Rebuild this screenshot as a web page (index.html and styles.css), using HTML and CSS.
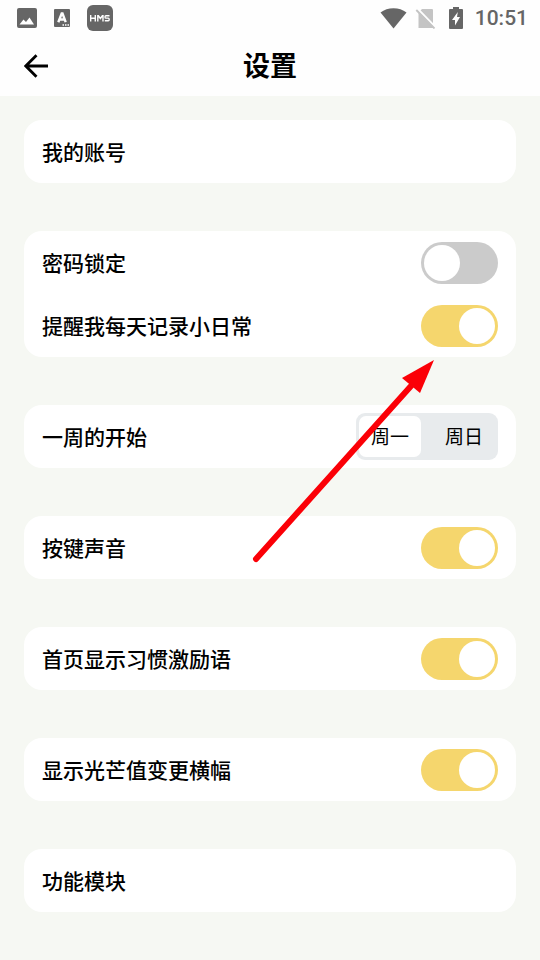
FILE: index.html
```html
<!DOCTYPE html>
<html lang="zh-CN">
<head>
<meta charset="utf-8">
<meta name="viewport" content="width=device-width, initial-scale=1">
<title>设置</title>
<link rel="stylesheet" href="styles.css">
</head>
<body>
<div class="status">
  <div class="status-left">
    <svg width="20" height="20" viewBox="0 0 20 20" aria-hidden="true"><path fill="#666" fill-rule="evenodd" d="M2 0h16q2 0 2 2v16q0 2-2 2H2q-2 0-2-2V2q0-2 2-2zM2.500 16.500h14.500L12.500 9.500 9 14 6.500 11.500z"/></svg>
    <svg width="16" height="18" viewBox="0 0 16 18" aria-hidden="true"><rect width="16" height="18" rx="1" fill="#666"/><path fill="none" stroke="#fff" stroke-width="2.400" d="M4.300 13.200 7.700 4.500h.8l3.200 8.700M5.500 10.500h5"/><path stroke="#fff" stroke-width="1.500" stroke-dasharray="1.500 1" d="M8.500 16h7"/></svg>
    <svg width="26" height="26" viewBox="0 0 26 26" aria-hidden="true"><rect width="26" height="26" rx="6" fill="#666"/><path fill="none" stroke="#fff" stroke-width="1.400" d="M3.700 10v6.500M8.300 10v6.500M3.700 13.200h4.600M10.800 16.500v-5.700h.6l2 2.700 2-2.700h.6v5.700M22.500 10.700h-3.500q-1 0-1 1.200t1 1.200h2.200q1 0 1 1.300t-1 1.300h-3.400"/></svg>
  </div>
  <div class="status-right">
    <svg width="27" height="21" viewBox="0 0 27 21" aria-hidden="true"><path fill="#666" d="M.5 4.500Q6 .2 13.500.2t13 4.300L13.500 20.500z"/></svg>
    <svg width="22" height="21" viewBox="0 0 22 21" aria-hidden="true"><path fill="#c4c4c4" d="M7 1h10q1 0 1 1v18H3.500V4.500z"/><path stroke="#fefefe" stroke-width="2.200" d="M2 .2 21 19.700"/><path stroke="#c4c4c4" stroke-width="1.800" d="M1.300 2 19.500 20.500"/></svg>
    <svg width="14" height="22" viewBox="0 0 14 22" aria-hidden="true"><path fill="#666" d="M4 0h6v2h3q1 0 1 1v18q0 1-1 1H1q-1 0-1-1V3q0-1 1-1h3z"/><path fill="#fff" d="M8.800 5 3 13h3v5.500L11 10H8z"/></svg>
    <time class="clock">10:51</time>
  </div>
</div>
<header class="header">
  <button class="back" type="button" aria-label="返回">
    <svg width="24" height="24" viewBox="0 0 24 24" aria-hidden="true"><path fill="none" stroke="#000" stroke-width="2.800" d="M12.500 1.200 1.800 12l10.700 10.800M2 12h22"/></svg>
  </button>
  <h1 class="title">设置</h1>
</header>
<main class="settings">
  <section class="card">
    <a class="row" href="#account"><span class="name">我的账号</span></a>
  </section>
  <section class="card">
    <label class="row"><span class="name">密码锁定</span><input class="switch" type="checkbox" role="switch"></label>
    <label class="row"><span class="name">提醒我每天记录小日常</span><input class="switch" type="checkbox" role="switch" checked></label>
  </section>
  <section class="card card-week">
    <fieldset class="row">
      <legend class="name">一周的开始</legend>
      <div class="segments">
        <label class="segment"><input class="segment-input" type="radio" name="week" checked>周一</label>
        <label class="segment"><input class="segment-input" type="radio" name="week">周日</label>
      </div>
    </fieldset>
    <svg class="arrow" width="184" height="206" viewBox="0 0 184 206" aria-hidden="true"><path stroke="#fb0007" stroke-width="6" stroke-linecap="round" d="M4 201 159 28"/><path fill="#fb0007" d="M182 2 150 20l18 15z"/></svg>
  </section>
  <section class="card">
    <label class="row"><span class="name">按键声音</span><input class="switch" type="checkbox" role="switch" checked></label>
  </section>
  <section class="card">
    <label class="row"><span class="name">首页显示习惯激励语</span><input class="switch" type="checkbox" role="switch" checked></label>
  </section>
  <section class="card">
    <label class="row"><span class="name">显示光芒值变更横幅</span><input class="switch" type="checkbox" role="switch" checked></label>
  </section>
  <section class="card">
    <a class="row" href="#modules"><span class="name">功能模块</span></a>
  </section>
</main>
</body>
</html>
```
FILE: styles.css
```css
* {
  box-sizing: border-box;
}

body {
  margin: 0;
  background: #f6f8f3;
  color: #000;
  font-family: "Noto Sans CJK SC", sans-serif;
}

svg {
  display: block;
}

.status {
  display: flex;
  justify-content: space-between;
  height: 36px;
  padding: 0 12px 0 17px;
  background: #fefefe;
}

.status-left,
.status-right {
  display: flex;
  align-items: center;
}

.status-left {
  gap: 17px;
}

.status-right {
  gap: 12px;
}

.status-right svg:first-child {
  margin-right: -4px;
}

.clock {
  color: #666;
  font: 500 21px/36px Roboto, sans-serif;
}

.header {
  display: grid;
  grid-template-columns: 24px 1fr 24px;
  align-items: center;
  height: 60px;
  padding: 0 24px;
  background: #fefefe;
}

.back {
  padding: 0;
  border: 0;
  background: none;
}

.title {
  margin: 0;
  padding-bottom: 2px;
  font-size: 27px;
  font-weight: 700;
  line-height: 36px;
  text-align: center;
}

.settings {
  display: flex;
  flex-direction: column;
  gap: 48px;
  padding: 24px 24px 48px;
}

.card {
  border-radius: 18px;
  background: #fff;
}

.row {
  display: flex;
  align-items: center;
  justify-content: space-between;
  height: 63px;
  margin: 0;
  padding: 0 18px;
  border: 0;
  color: inherit;
  text-decoration: none;
}

.name {
  float: left;
  padding: 0 0 2px;
  font-size: 21px;
  font-weight: 500;
  line-height: 30px;
}

.switch {
  appearance: none;
  display: flex;
  width: 77px;
  height: 42px;
  margin: 0;
  padding: 3px;
  border-radius: 21px;
  background: #cbcbcb;
}

.switch::before {
  content: "";
  width: 36px;
  height: 36px;
  border-radius: 50%;
  background: #fff;
}

.switch:checked {
  justify-content: flex-end;
  background: #f5d66d;
}

.card-week {
  position: relative;
}

.segments {
  display: flex;
  gap: 12px;
  margin-left: auto;
  padding: 3px;
  border-radius: 9px;
  background: #e8ebed;
}

.segment {
  width: 62px;
  padding-bottom: 2px;
  border-radius: 7px;
  font-size: 19px;
  line-height: 39px;
  text-align: center;
}

.segment:has(:checked) {
  background: #fff;
}

.segment-input {
  appearance: none;
  position: absolute;
  margin: 0;
}

.arrow {
  position: absolute;
  top: -47px;
  right: 80px;
  pointer-events: none;
}
```
